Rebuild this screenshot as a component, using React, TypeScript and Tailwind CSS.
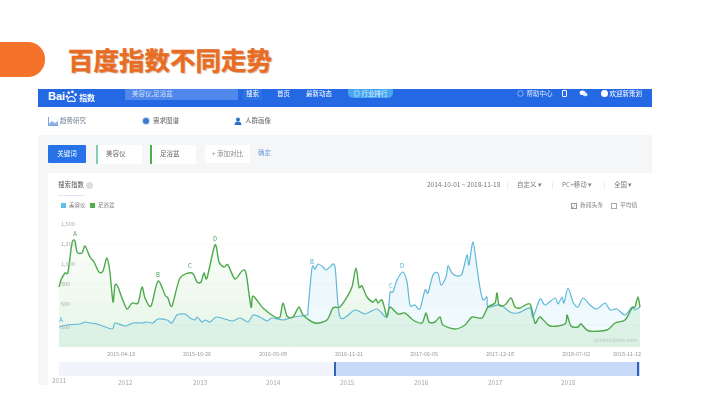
import React from "react";

const green: number[][] = [[59,287],[61,280],[65,273],[68,272],[72,243],[75,241],[77,252],[82,253],[85,246],[90,257],[94,262],[99,272],[103,271],[107,258],[110,273],[113,302],[115,285],[118,287],[122,298],[127,309],[132,303],[138,303],[142,287],[145,298],[151,306],[158,281],[165,295],[168,298],[172,306],[180,278],[192,273],[197,282],[201,282],[204,273],[207,278],[215,245],[219,262],[224,267],[228,265],[235,279],[242,271],[246,273],[251,307],[253,296],[263,308],[275,317],[280,317],[283,303],[287,316],[293,317],[299,307],[303,315],[315,323],[327,320],[333,308],[340,307],[347,297],[352,287],[356,268],[359,287],[362,286],[367,297],[373,302],[376,299],[378,303],[382,300],[385,310],[387,317],[390,307],[398,314],[405,313],[413,320],[422,323],[426,313],[429,322],[435,322],[440,317],[443,325],[455,329],[465,325],[472,317],[482,318],[488,307],[495,303],[497,293],[499,305],[505,305],[511,298],[515,307],[520,308],[530,304],[535,323],[540,317],[550,326],[565,324],[567,315],[571,326],[578,327],[581,324],[589,331],[607,330],[615,323],[625,320],[632,308],[635,307],[638,297],[640,307]];
const blue: number[][] = [[59,327],[67,325],[80,324],[85,322],[90,323],[97,324],[112,329],[115,323],[125,326],[133,323],[142,323],[147,322],[153,323],[158,319],[167,320],[172,323],[177,315],[185,314],[190,318],[195,320],[197,317],[202,322],[205,320],[210,322],[217,317],[232,321],[240,318],[248,322],[253,315],[260,317],[267,321],[272,318],[283,320],[293,317],[307,315],[308,310],[312,268],[315,269],[318,264],[323,267],[326,270],[330,267],[335,267],[340,317],[355,310],[365,314],[377,309],[387,317],[390,293],[393,292],[397,280],[403,272],[407,282],[410,305],[415,305],[420,309],[425,290],[428,293],[433,275],[438,273],[441,285],[446,277],[448,266],[452,273],[457,276],[462,274],[467,255],[469,265],[473,242],[477,268],[480,288],[483,300],[487,297],[488,307],[500,305],[510,312],[518,313],[530,308],[533,317],[540,299],[545,305],[555,298],[558,304],[562,297],[564,303],[568,288],[573,302],[578,307],[583,298],[590,305],[597,309],[605,303],[610,310],[617,309],[625,315],[632,307],[635,310],[640,307]];

// Catmull-Rom smoothing, so the series read as the soft curves of the reference
const line = (p: number[][]) => {
  let d = `M${p[0][0]} ${p[0][1]}`;
  for (let i = 0; i < p.length - 1; i++) {
    const a = p[Math.max(i - 1, 0)], b = p[i], c = p[i + 1], e = p[Math.min(i + 2, p.length - 1)];
    const t = 0.14;
    d += ` C${(b[0] + (c[0] - a[0]) * t).toFixed(1)} ${(b[1] + (c[1] - a[1]) * t).toFixed(1)} ${(c[0] - (e[0] - b[0]) * t).toFixed(1)} ${(c[1] - (e[1] - b[1]) * t).toFixed(1)} ${c[0]} ${c[1]}`;
  }
  return d;
};
const area = (p: number[][]) => line(p) + " L640 347 L59 347 Z";

const font = { fontFamily: "'Noto Sans CJK SC', sans-serif" };

function Chart() {
  const yLabels: [string, number][] = [["1,500", 224], ["1,200", 244], ["1,000", 264], ["800", 284], ["500", 304], ["200", 327]];
  const xLabels: [string, number][] = [["2015-04-13", 121], ["2015-10-26", 197], ["2016-05-09", 273], ["2016-11-21", 349], ["2017-06-05", 424], ["2017-12-18", 500], ["2018-07-02", 576], ["2018-11-12", 627]];
  const marks: [string, number, number, string][] = [["A", 75, 236, "#4aa05a"], ["B", 158, 277, "#4aa05a"], ["C", 190, 268, "#4aa05a"], ["D", 215, 241, "#4aa05a"], ["B", 312, 264, "#4fb0d0"], ["C", 391, 288, "#4fb0d0"], ["D", 402, 268, "#4fb0d0"], ["A", 61, 322, "#4fb0d0"]];
  return (
    <svg viewBox="48 215 604 146" className="block shrink-0 w-[604px] h-[146px]">
      <defs>
        <linearGradient id="gf" x1="0" y1="0" x2="0" y2="1">
          <stop offset="0" stopColor="#62c462" stopOpacity="0.03" />
          <stop offset="0.55" stopColor="#62c462" stopOpacity="0.1" />
          <stop offset="1" stopColor="#62c462" stopOpacity="0.17" />
        </linearGradient>
        <linearGradient id="bf" x1="0" y1="0" x2="0" y2="1">
          <stop offset="0" stopColor="#5cc0e8" stopOpacity="0.12" />
          <stop offset="1" stopColor="#5cc0e8" stopOpacity="0.08" />
        </linearGradient>
      </defs>
      {[224, 244, 264, 284, 304, 325].map((y) => (
        <line key={y} x1="59" x2="640" y1={y} y2={y} stroke="#f8f9fa" strokeWidth="1" />
      ))}
      <path d={area(blue)} fill="url(#bf)" />
      <path d={area(green)} fill="url(#gf)" />
      <path d={line(blue)} fill="none" stroke="#5fb8d8" strokeWidth="1.2" strokeLinejoin="round" />
      <path d={line(green)} fill="none" stroke="#4ea94c" strokeWidth="1.4" strokeLinejoin="round" />
      {yLabels.map(([t, y]) => (
        <text key={t} x="61" y={y + 2} fontSize="5.5" fill="#b0b0b0" style={font}>{t}</text>
      ))}
      {xLabels.map(([t, x]) => (
        <text key={t} x={x} y="356" fontSize="5.5" textAnchor="middle" fill="#999" style={font}>{t}</text>
      ))}
      {marks.map(([t, x, y, c], i) => (
        <text key={i} x={x} y={y} fontSize="6" textAnchor="middle" fill={c} style={font}>{t}</text>
      ))}
      <text x="637" y="342" fontSize="5" textAnchor="end" fill="#bcc6c6" style={font}>@index.baidu.com</text>
    </svg>
  );
}

function Chip({ label, color }: { label: string; color: string }) {
  return (
    <div className="h-[19px] w-[46px] flex items-center bg-white text-[6.5px] text-[#666]">
      <span className={`w-[2px] h-[19px] ${color}`} />
      <span className="ml-[8px] whitespace-nowrap">{label}</span>
    </div>
  );
}

export default function App() {
  return (
    <div className="w-[720px] h-[405px] bg-white overflow-hidden" style={font}>
      <div className="h-[89px] pt-[42px] flex items-start">
        <div className="w-[45px] h-[35px] rounded-r-[17px] bg-[#f5722a]" />
        <h1 className="ml-[23px] -mt-[1px] text-[25.5px] leading-[36px] font-bold whitespace-nowrap text-[#e96c24] [-webkit-text-stroke:0.4px_#e96c24] [text-shadow:1px_1px_1px_rgba(150,90,40,0.45)]">百度指数不同走势</h1>
      </div>

      <div className="ml-[38px] w-[614px] h-[296px] flex flex-col bg-[#f5f6f8] blur-[0.45px]">
        {/* top bar */}
        <div className="h-[18px] shrink-0 bg-[#2469e3] flex items-start text-white text-[6.5px] leading-[8px] whitespace-nowrap">
          <div className="ml-[10px] w-[57px] flex items-center">
            <span className="text-[11px] leading-[13px] font-bold font-['Liberation_Sans'] mt-[1px]">Bai</span>
            <svg viewBox="0 0 14 14" className="w-[13px] h-[13px]">
              <circle cx="4" cy="3" r="1.5" fill="#fff" /><circle cx="8" cy="2" r="1.5" fill="#fff" /><circle cx="11.5" cy="5" r="1.4" fill="#fff" /><circle cx="2" cy="7" r="1.4" fill="#fff" />
              <path d="M3 12c-1-3 2-5 4-5s4.500 2 4 5c-1 1-2 0-4 0s-3 1-4 0z" fill="none" stroke="#fff" strokeWidth="1.2" />
            </svg>
            <span className="ml-[1px] text-[8px] leading-[10px] mt-[3px] font-bold">指数</span>
          </div>
          <div className="ml-[20px] w-[113px] h-[11px] bg-[#4f88ea] pl-[7px] text-[#cfe0fb]">美容仪,足浴盆</div>
          <span className="ml-[5px] w-[19px] h-[11px] bg-[#2f72e6] text-center">搜索</span>
          <span className="ml-[15px]">首页</span>
          <span className="ml-[16px]">最新动态</span>
          <span className="ml-[16px] w-[45px] h-[9px] rounded-b-[5px] bg-[#47a6f2] text-center text-[#e4f4ff]">◎ 行业排行</span>
          <div className="ml-auto mr-[10px] flex items-center">
            <svg viewBox="0 0 8 8" className="w-[7px] h-[7px]"><circle cx="4" cy="4" r="3.200" fill="none" stroke="#cfe0fb" strokeWidth="0.7" /></svg>
            <span className="ml-[3px] text-[#dce8fc]">帮助中心</span>
            <span className="ml-[9px] w-[5px] h-[7px] rounded-[1px] border border-white" />
            <svg viewBox="0 0 10 8" className="ml-[12px] w-[9px] h-[7px]"><ellipse cx="3.800" cy="3.200" rx="3.200" ry="2.600" fill="#fff" /><ellipse cx="7" cy="5" rx="2.600" ry="2.200" fill="#dce8fc" /></svg>
            <span className="ml-[13px] w-[7px] h-[7px] rounded-full bg-white" />
            <span className="ml-[2px]">欢迎新策划</span>
          </div>
        </div>

        {/* tabs */}
        <div className="h-[28px] shrink-0 bg-white flex items-center text-[6.5px] text-[#666]">
          <svg viewBox="0 0 10 9" className="ml-[10px] w-[10px] h-[9px]"><path d="M0.500 0v8.500h9.500V4L7 6 4 4 0.500 7z" fill="#8fb4e8" /><path d="M0.500 0v8.500h9.500" fill="none" stroke="#5f8fd6" strokeWidth="0.8" /></svg>
          <span className="ml-[2px] w-[26px] text-[#6f7f98]">趋势研究</span>
          <span className="ml-[57px] w-[6px] h-[6px] rounded-full bg-[#3f78d0] ring-[1px] ring-[#c9dbf5]" />
          <span className="ml-[4px] w-[26px]">需求图谱</span>
          <svg viewBox="0 0 8 8" className="ml-[55px] w-[8px] h-[8px]"><circle cx="4" cy="2.400" r="2" fill="#2f6fc8" /><path d="M0.500 8c0-2.500 1.500-3.500 3.500-3.500S7.500 5.500 7.500 8z" fill="#2f6fc8" /></svg>
          <span className="ml-[3px]">人群画像</span>
        </div>

        {/* keyword chips */}
        <div className="h-[38px] shrink-0 flex items-center pl-[10px] text-[6.5px]">
          <button className="w-[38px] h-[18px] rounded-[1px] bg-[#2672e6] text-white">关键词</button>
          <div className="ml-[10px]"><Chip label="美容仪" color="bg-[#7fcdbd]" /></div>
          <div className="ml-[8px]"><Chip label="足浴盆" color="bg-[#4fb04a]" /></div>
          <div className="ml-[9px] h-[18px] w-[45px] bg-white flex items-center justify-center text-[#888] whitespace-nowrap">+ 添加对比</div>
          <span className="ml-[8px] -mt-[2px] text-[#6d9ae0]">确定</span>
        </div>

        {/* card */}
        <div className="ml-[10px] flex-1 min-h-0 bg-white flex flex-col text-[6.5px] text-[#808080]">
          <div className="h-[22px] shrink-0 mt-[1px] flex items-center pl-[10px] whitespace-nowrap">
            <div className="w-[26px] h-[22px] pt-[6px] leading-[8px] border-b border-[#dbe5f3] text-[#555]">搜索指数</div>
            <span className="ml-[2px] w-[7px] h-[7px] rounded-full bg-[#dedede]" />
            <span className="ml-[334px] w-[73px] text-[#777]">2014-10-01 ~ 2018-11-18</span>
            <span className="ml-[7px] w-[1px] h-[7px] bg-[#eee]" />
            <span className="ml-[9px] w-[30px]">自定义 ▾</span>
            <span className="ml-[5px] w-[1px] h-[7px] bg-[#eee]" />
            <span className="ml-[9px] w-[38px]">PC+移动 ▾</span>
            <span className="ml-[4px] w-[1px] h-[7px] bg-[#eee]" />
            <span className="ml-[9px]">全国 ▾</span>
          </div>
          <div className="h-[19px] shrink-0 flex items-center pl-[13px] whitespace-nowrap text-[5.5px]">
            <span className="w-[5px] h-[5px] bg-[#5cc0e8]" />
            <span className="ml-[3px] w-[16px]">美容仪</span>
            <span className="ml-[5px] w-[5px] h-[5px] bg-[#4fb04a]" />
            <span className="ml-[3px] w-[16px]">足浴盆</span>
            <span className="ml-[457px] w-[6px] h-[6px] border border-[#999] text-[5px] leading-[4px]">✓</span>
            <span className="ml-[3px] w-[23px] text-[5.8px]">新闻头条</span>
            <span className="ml-[8px] w-[6px] h-[6px] border border-[#aaa]" />
            <span className="ml-[3px] text-[5.8px]">平均值</span>
          </div>
          <Chart />
          <div className="ml-[11px] w-[581px] h-[14px] shrink-0 mt-[1px] flex bg-[#f1f5fb]">
            <div className="w-[275px]" />
            <div className="flex-1 flex justify-between bg-[#c6d9f6]">
              <span className="w-[2px] h-[14px] bg-[#2f62b8]" />
              <span className="w-[2px] h-[14px] bg-[#2f62b8] mr-[1px]" />
            </div>
          </div>
          <div className="ml-[4px] mt-[2px] shrink-0 flex text-[6.5px] leading-[9px] text-[#aaa]">
            <span className="w-[66px] -mt-[2px]">2011</span>
            <span className="w-[75px]">2012</span>
            <span className="w-[73px]">2013</span>
            <span className="w-[74px]">2014</span>
            <span className="w-[74px]">2015</span>
            <span className="w-[74px]">2016</span>
            <span className="w-[73px]">2017</span>
            <span className="w-[74px]">2018</span>
          </div>
        </div>
      </div>
    </div>
  );
}
